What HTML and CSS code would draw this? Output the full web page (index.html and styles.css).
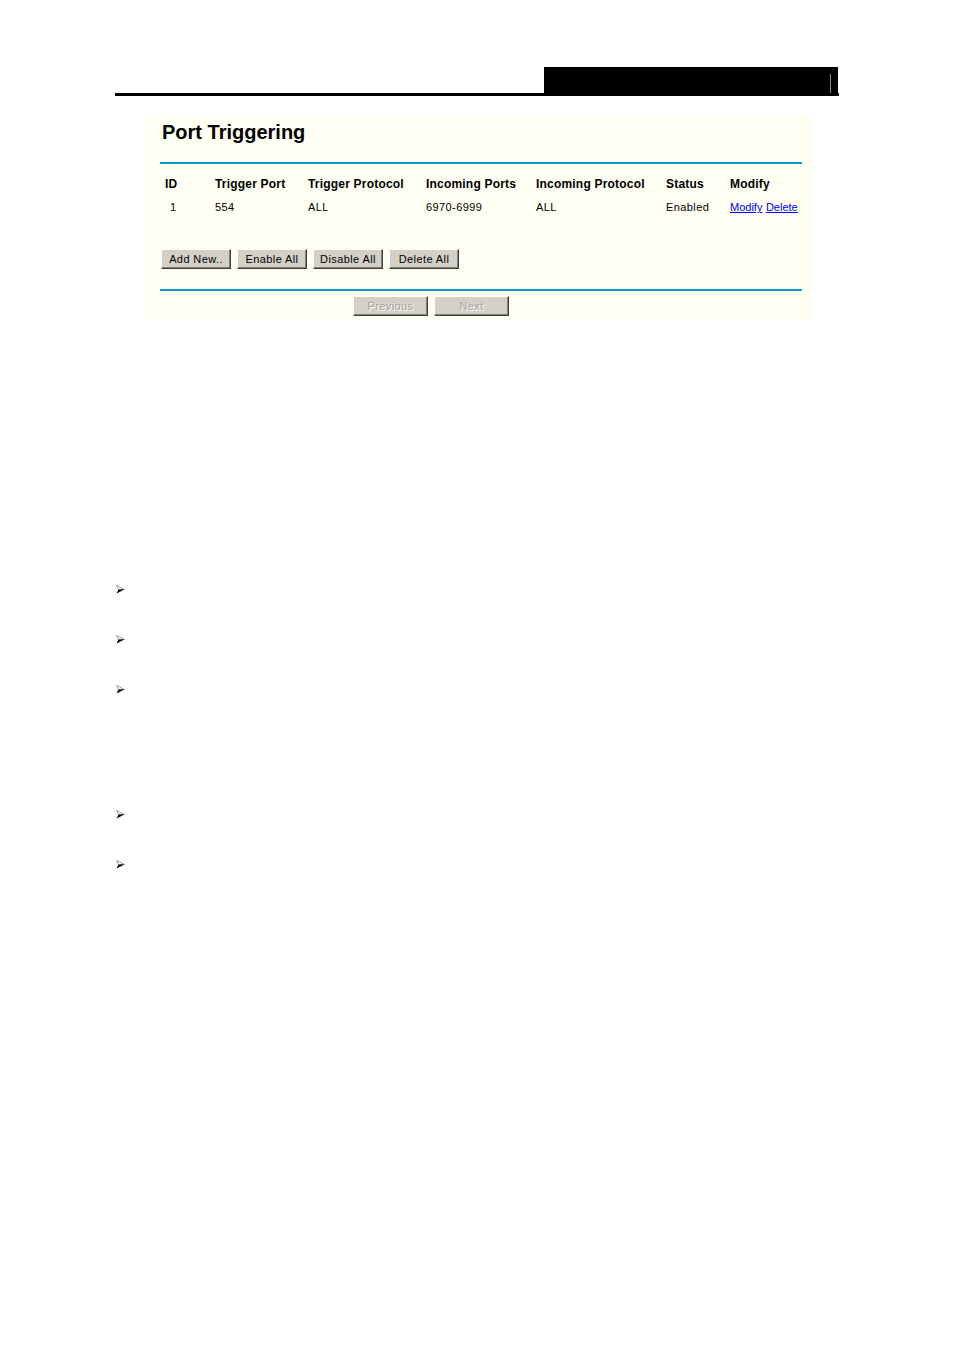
FILE: index.html
```html
<!DOCTYPE html>
<html>
<head>
<meta charset="utf-8">
<title>Port Triggering</title>
<link rel="stylesheet" href="styles.css">
</head>
<body>
<div class="page">
  <div class="header">
    <div class="header-box"><span class="header-mark"></span></div>
  </div>

  <div class="panel">
    <div class="title">Port Triggering</div>
    <div class="rule rule-top"></div>
    <div class="grid">
      <div class="th">ID</div>
      <div class="th">Trigger Port</div>
      <div class="th">Trigger Protocol</div>
      <div class="th">Incoming Ports</div>
      <div class="th">Incoming Protocol</div>
      <div class="th">Status</div>
      <div class="th">Modify</div>
      <div class="td td-id">1</div>
      <div class="td">554</div>
      <div class="td">ALL</div>
      <div class="td">6970-6999</div>
      <div class="td">ALL</div>
      <div class="td">Enabled</div>
      <div class="td"><a class="link" href="#">Modify</a> <a class="link" href="#">Delete</a></div>
    </div>
    <div class="actions">
      <button class="btn btn-add">Add New..</button>
      <button class="btn btn-enable">Enable All</button>
      <button class="btn btn-disable">Disable All</button>
      <button class="btn btn-delete">Delete All</button>
    </div>
    <div class="rule rule-bottom"></div>
    <div class="nav">
      <button class="btn btn-nav" disabled>Previous</button>
      <button class="btn btn-nav" disabled>Next</button>
    </div>
  </div>

  <div class="bullets">
    <div class="bullet b1"><svg class="arrow" viewBox="0 0 9 9" width="9" height="9"><polygon points="0.5,0.5 8.5,4.5 2.5,4.5" fill="#fff" stroke="#888" stroke-width="0.8"/><polygon points="2.5,4.5 8.5,4.5 0.5,8.5" fill="#000"/></svg></div>
    <div class="bullet b2"><svg class="arrow" viewBox="0 0 9 9" width="9" height="9"><polygon points="0.5,0.5 8.5,4.5 2.5,4.5" fill="#fff" stroke="#888" stroke-width="0.8"/><polygon points="2.5,4.5 8.5,4.5 0.5,8.5" fill="#000"/></svg></div>
    <div class="bullet b3"><svg class="arrow" viewBox="0 0 9 9" width="9" height="9"><polygon points="0.5,0.5 8.5,4.5 2.5,4.5" fill="#fff" stroke="#888" stroke-width="0.8"/><polygon points="2.5,4.5 8.5,4.5 0.5,8.5" fill="#000"/></svg></div>
    <div class="bullet b4"><svg class="arrow" viewBox="0 0 9 9" width="9" height="9"><polygon points="0.5,0.5 8.5,4.5 2.5,4.5" fill="#fff" stroke="#888" stroke-width="0.8"/><polygon points="2.5,4.5 8.5,4.5 0.5,8.5" fill="#000"/></svg></div>
    <div class="bullet b5"><svg class="arrow" viewBox="0 0 9 9" width="9" height="9"><polygon points="0.5,0.5 8.5,4.5 2.5,4.5" fill="#fff" stroke="#888" stroke-width="0.8"/><polygon points="2.5,4.5 8.5,4.5 0.5,8.5" fill="#000"/></svg></div>
  </div>
</div>
</body>
</html>
```

FILE: styles.css
```css
html, body {
  margin: 0;
  padding: 0;
  background: #ffffff;
  font-family: "Liberation Sans", Arial, sans-serif;
  color: #000;
}

.page {
  width: 954px;
  height: 1350px;
  padding-top: 67px;
  box-sizing: border-box;
}

.header {
  margin-left: 115px;
  width: 724px;
  height: 26px;
  border-bottom: 3px solid #000;
  display: flex;
  justify-content: flex-end;
}

.header-box {
  width: 294px;
  height: 26px;
  margin-right: 1px;
  background: #000;
  display: flex;
  justify-content: flex-end;
  align-items: flex-end;
}

.header-mark {
  width: 1px;
  height: 19px;
  margin-right: 7px;
  background: #8a8a8a;
}

.panel {
  margin-top: 19px;
  margin-left: 144px;
  width: 667px;
  height: 205px;
  background: #fefef2;
  padding-top: 6px;
  box-sizing: border-box;
}

.title {
  margin-left: 18px;
  font-size: 20px;
  line-height: 23px;
  font-weight: bold;
}

.rule {
  margin-left: 16px;
  width: 642px;
  height: 2px;
  background: #0e98c9;
}

.rule-top {
  margin-top: 18px;
}

.grid {
  margin-left: 16px;
  width: 642px;
  margin-top: 12px;
  display: grid;
  grid-template-columns: 50px 93px 118px 110px 130px 64px 77px;
  row-gap: 7px;
}

.th {
  padding-left: 5px;
  font-size: 12px;
  line-height: 16px;
  font-weight: bold;
  letter-spacing: 0.2px;
  white-space: nowrap;
}

.td {
  padding-left: 5px;
  font-size: 11px;
  line-height: 16px;
  letter-spacing: 0.4px;
  white-space: nowrap;
}

.td-id {
  padding-left: 10px;
}

.link {
  color: #0000ff;
  text-decoration: underline;
  letter-spacing: 0;
}

.actions {
  margin-top: 34px;
  margin-left: 17px;
  display: flex;
  gap: 6px;
  height: 20px;
}

.btn {
  height: 20px;
  padding: 0;
  margin: 0;
  background: #d4d0c8;
  border-style: solid;
  border-width: 1px;
  border-color: #ffffff #404040 #404040 #ffffff;
  box-shadow: inset -1px -1px 0 #808080;
  font-family: "Liberation Sans", Arial, sans-serif;
  font-size: 11px;
  letter-spacing: 0.4px;
  color: #000;
  line-height: 16px;
}

.btn-add { width: 70px; }
.btn-enable { width: 70px; }
.btn-disable { width: 70px; }
.btn-delete { width: 70px; }

.rule-bottom {
  margin-top: 20px;
}

.nav {
  margin-top: 5px;
  margin-left: 209px;
  display: flex;
  gap: 6px;
}

.btn-nav {
  width: 75px;
  color: #a6a298;
  text-shadow: 1px 1px 0 #ffffff;
}

.bullets {
  margin-top: 265px;
  margin-left: 116px;
  display: flex;
  flex-direction: column;
}

.bullet {
  height: 9px;
}

.arrow {
  display: block;
}

.b2, .b3 { margin-top: 41px; }
.b4 { margin-top: 116px; }
.b5 { margin-top: 41px; }
```
